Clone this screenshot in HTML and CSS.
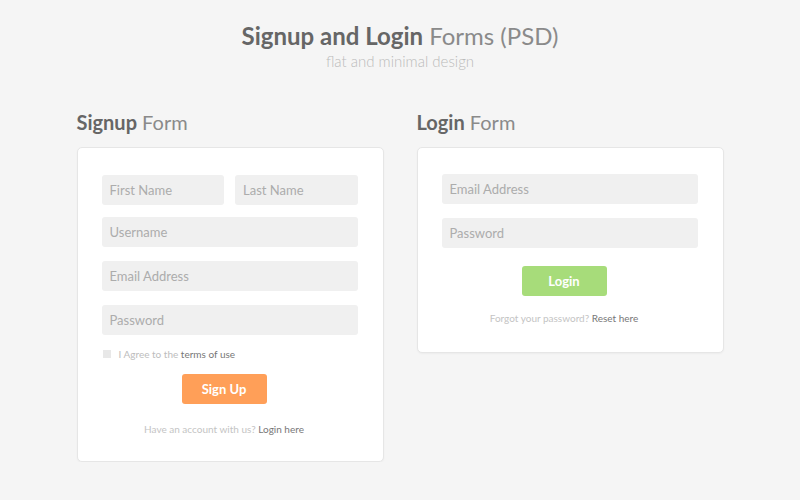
FILE: index.html
```html
<!DOCTYPE html>
<html>
<head>
  <title>Signup and Login Forms</title>
  <link rel="stylesheet" href="styles.css">
</head>
<body>
  <div class="header">
    <h1><b>Signup and Login</b> Forms (PSD)</h1>
    <p class="tagline">flat and minimal design</p>
  </div>

  <div class="forms">
    <div class="column">
      <h2><b>Signup</b> Form</h2>
      <div class="card signup">
        <div class="row">
          <input type="text" placeholder="First Name">
          <input type="text" placeholder="Last Name">
        </div>
        <input type="text" placeholder="Username">
        <input type="email" placeholder="Email Address">
        <input type="password" placeholder="Password">
        <label class="agree"><span class="check"></span>I Agree to the&nbsp;<a href="#">terms of use</a></label>
        <button class="btn btn-orange">Sign Up</button>
        <p class="note">Have an account with us? <a href="#">Login here</a></p>
      </div>
    </div>

    <div class="column">
      <h2><b>Login</b> Form</h2>
      <div class="card login">
        <input type="email" placeholder="Email Address">
        <input type="password" placeholder="Password">
        <button class="btn btn-green">Login</button>
        <p class="note">Forgot your password? <a href="#">Reset here</a></p>
      </div>
    </div>
  </div>
</body>
</html>
```

FILE: styles.css
```css
body {
  font-family: Lato, "Open Sans", sans-serif;
  margin: 0;
  padding: 0;
  background-color: #f5f5f5;
  color: #888;
}

.header {
  text-align: center;
  padding-top: 21px;
}

h1 {
  margin: 0;
  font-size: 24px;
  font-weight: 400;
  color: #8a8a8a;
  line-height: 30px;
}

h1 b, h2 b {
  color: #666;
  font-weight: 700;
}

.tagline {
  margin: 0;
  font-size: 15px;
  font-weight: 300;
  color: #bbb;
  line-height: 20px;
}

.forms {
  display: flex;
  justify-content: center;
  gap: 33px;
  margin-top: 38px;
}

.column {
  width: 307px;
}

h2 {
  margin: 0 0 12px 0;
  font-size: 20px;
  font-weight: 400;
  color: #8a8a8a;
  line-height: 26px;
}

.card {
  box-sizing: border-box;
  background-color: #fff;
  border: 1px solid #e6e6e6;
  border-radius: 5px;
  box-shadow: 0 1px 2px rgba(0, 0, 0, 0.04);
  padding: 26px 25px 25px 24px;
  display: flex;
  flex-direction: column;
}

.signup {
  padding-top: 27px;
}

.login {
  padding-bottom: 27px;
}

.row {
  display: flex;
  gap: 11px;
  margin-bottom: 12px;
}

.row input {
  width: 0;
  flex: 1;
  margin-bottom: 0;
}

input {
  box-sizing: border-box;
  height: 30px;
  border: none;
  border-radius: 3px;
  background-color: #f0f0f0;
  padding: 0 8px;
  margin: 0 0 14px 0;
  font-family: inherit;
  font-size: 13px;
  color: #666;
}

input::placeholder {
  color: #acacac;
}

input:focus {
  outline: none;
  background-color: #ebebeb;
}

.agree {
  display: flex;
  align-items: center;
  font-size: 10px;
  color: #bdbdbd;
  margin: -4px 0 11px 1px;
  height: 18px;
}

.check {
  width: 8px;
  height: 8px;
  background-color: #e8e8e8;
  margin-right: 8px;
}

a {
  color: #777;
  text-decoration: none;
}

/* buttons and notes sit a little left of the card centre */
.btn, .note {
  margin-right: 11px;
}

.btn {
  align-self: center;
  width: 85px;
  height: 30px;
  border: none;
  border-radius: 3px;
  color: #fff;
  font-family: inherit;
  font-size: 13px;
  font-weight: 700;
  cursor: pointer;
}

.btn-orange {
  background-color: #ff9f58;
}

.btn-green {
  background-color: #a7dc7a;
  margin-top: 4px;
}

.note {
  margin-top: 18px;
  margin-bottom: 0;
  margin-left: 0;
  text-align: center;
  font-size: 10px;
  color: #c4c4c4;
  line-height: 14px;
}

.login .note {
  margin-top: 15px;
}
```
